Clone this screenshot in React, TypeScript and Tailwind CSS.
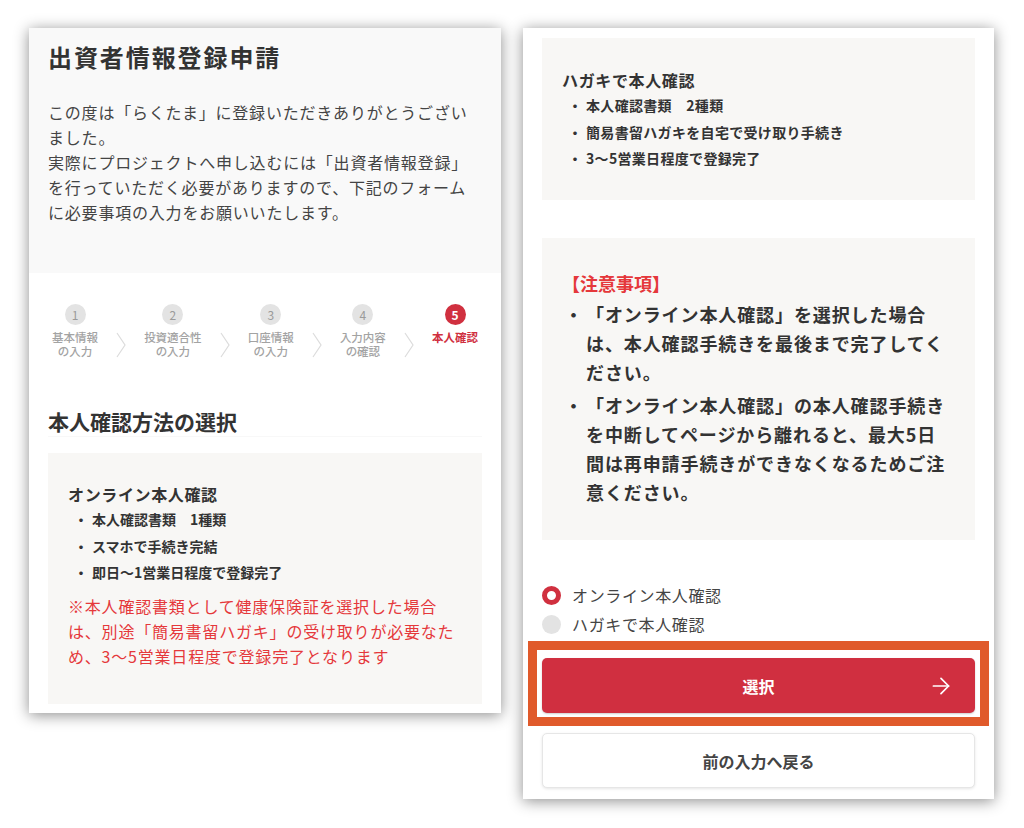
import { ArrowRight } from "lucide-react";

const steps = [
  { n: 1, label: ["基本情報", "の入力"] },
  { n: 2, label: ["投資適合性", "の入力"] },
  { n: 3, label: ["口座情報", "の入力"] },
  { n: 4, label: ["入力内容", "の確認"] },
  { n: 5, label: ["本人確認"] },
];

const Chevron = () => (
  <svg width="10" height="26" viewBox="0 0 10 26">
    <path d="M1 1 L9 13 L1 25" fill="none" stroke="#dcdcdc" strokeWidth="1.2" />
  </svg>
);

const Stepper = () => (
  <div className="flex items-end justify-between px-[23px] pt-[31px]">
    {steps.map((s, i) => {
      const active = s.n === 5;
      return (
        <div key={s.n} className="contents">
          <div className="flex flex-col items-center">
            <div
              className={
                active
                  ? "w-[21px] h-[21px] rounded-full bg-[#d0303f] text-white text-[12px] font-bold flex items-center justify-center"
                  : "w-[21px] h-[21px] rounded-full bg-[#e3e3e3] text-[#9a9a9a] text-[12px] flex items-center justify-center"
              }
            >
              {s.n}
            </div>
            <div
              className={
                active
                  ? "mt-[5px] h-[28px] text-[11.5px] leading-[14px] font-bold text-[#d0303f] text-center"
                  : "mt-[5px] h-[28px] text-[11.5px] leading-[14px] font-medium text-[#a3a3a3] text-center"
              }
            >
              {s.label.map((l) => (
                <div key={l}>{l}</div>
              ))}
            </div>
          </div>
          {i < steps.length - 1 && <Chevron />}
        </div>
      );
    })}
  </div>
);

const Item = ({ children }: any) => (
  <div className="flex pl-[6px] text-[14px] leading-[26.5px] font-bold text-[#333]">
    <span className="w-[18px]">・</span>
    <span>{children}</span>
  </div>
);

const Note = ({ children }: any) => (
  <div className="flex">
    <span className="w-[24px] shrink-0 text-center">・</span>
    <span className="w-[366px]">{children}</span>
  </div>
);

export default function App() {
  return (
    <div className="w-[1024px] h-[828px] bg-white flex items-start gap-[22px] pl-[29px] pt-[28px] font-['Noto_Sans_CJK_JP',sans-serif] overflow-hidden">
      {/* left screen */}
      <div className="w-[472px] h-[685px] bg-white shadow-[0_2px_14px_rgba(0,0,0,0.45)] flex flex-col">
        <div className="h-[245px] bg-[#f9f9f9] px-[19px] pt-[13px]">
          <h1 className="text-[24px] leading-[32px] tracking-[0.08em] font-bold text-[#333]">出資者情報登録申請</h1>
          <p className="mt-[27px] text-[16px] leading-[25px] tracking-[0.05em] text-[#444]">
            この度は「らくたま」に登録いただきありがとうございました。
            <br />
            実際にプロジェクトへ申し込むには「出資者情報登録」を行っていただく必要がありますので、下記のフォームに必要事項の入力をお願いいたします。
          </p>
        </div>
        <Stepper />
        <div className="px-[19px]">
          <h2 className="mt-[48px] text-[21px] leading-[30px] font-bold text-[#333] border-b border-[#f8f8f8]">本人確認方法の選択</h2>
          <div className="mt-[16px] h-[251px] bg-[#f8f7f5] pl-[20px] pt-[29px]">
            <div className="text-[16px] leading-[24px] tracking-[0.04em] font-bold text-[#333]">オンライン本人確認</div>
            <Item>本人確認書類　1種類</Item>
            <Item>スマホで手続き完結</Item>
            <Item>即日〜1営業日程度で登録完了</Item>
            <p className="mt-[8px] w-[400px] text-[16px] leading-[25px] tracking-[0.05em] text-[#e5383b]">
              ※本人確認書類として健康保険証を選択した場合は、別途「簡易書留ハガキ」の受け取りが必要なため、3〜5営業日程度で登録完了となります
            </p>
          </div>
        </div>
      </div>

      {/* right screen */}
      <div className="w-[471px] h-[771px] bg-white shadow-[0_2px_14px_rgba(0,0,0,0.45)] px-[19px] pt-[10px]">
        <div className="h-[162px] bg-[#f8f7f5] pl-[20px] pt-[30px]">
          <div className="text-[16px] leading-[24px] tracking-[0.04em] font-bold text-[#333]">ハガキで本人確認</div>
          <div className="tracking-[0.02em]">
            <Item>本人確認書類　2種類</Item>
            <Item>簡易書留ハガキを自宅で受け取り手続き</Item>
            <Item>3〜5営業日程度で登録完了</Item>
          </div>
        </div>

        <div className="mt-[38px] h-[302px] bg-[#f8f7f5] px-[20px] pt-[32px] text-[18px] leading-[29px] tracking-[0.05em] font-bold text-[#333]">
          <div className="text-[18px] leading-[26px] font-bold text-[#e5383b] tracking-normal">【注意事項】</div>
          <div className="mt-[4px] flex flex-col gap-[4px]">
            <Note>「オンライン本人確認」を選択した場合は、本人確認手続きを最後まで完了してください。</Note>
            <Note>「オンライン本人確認」の本人確認手続きを中断してページから離れると、最大5日間は再申請手続きができなくなるためご注意ください。</Note>
          </div>
        </div>

        <div className="mt-[41px] flex flex-col text-[16px] leading-[29px] tracking-[0.04em] text-[#444]">
          <label className="flex items-center gap-[11px]">
            <span className="w-[19px] h-[19px] rounded-full border-[5.5px] border-[#d0303f] bg-white" />
            オンライン本人確認
          </label>
          <label className="flex items-center gap-[11px]">
            <span className="w-[19px] h-[19px] rounded-full bg-[#e3e3e3]" />
            ハガキで本人確認
          </label>
        </div>

        <div className="relative mt-[19px]">
          <button className="relative w-full h-[55px] rounded-[5px] bg-[#d02f40] text-white text-[16px] font-bold flex items-center justify-center shadow-[0_1px_2px_rgba(0,0,0,0.2)]">
            選択
            <ArrowRight className="absolute right-[21px] top-1/2 -translate-y-1/2" size={26} strokeWidth={1.6} />
          </button>
          <div className="absolute -left-[14px] -right-[14px] -top-[17px] -bottom-[13px] border-[9px] border-[#e05a2b] pointer-events-none" />
        </div>

        <button className="mt-[20px] w-full h-[55px] rounded-[5px] bg-white border border-[#e6e6e6] shadow-[0_1px_3px_rgba(0,0,0,0.1)] text-[16px] font-bold text-[#444]">
          前の入力へ戻る
        </button>
      </div>
    </div>
  );
}
